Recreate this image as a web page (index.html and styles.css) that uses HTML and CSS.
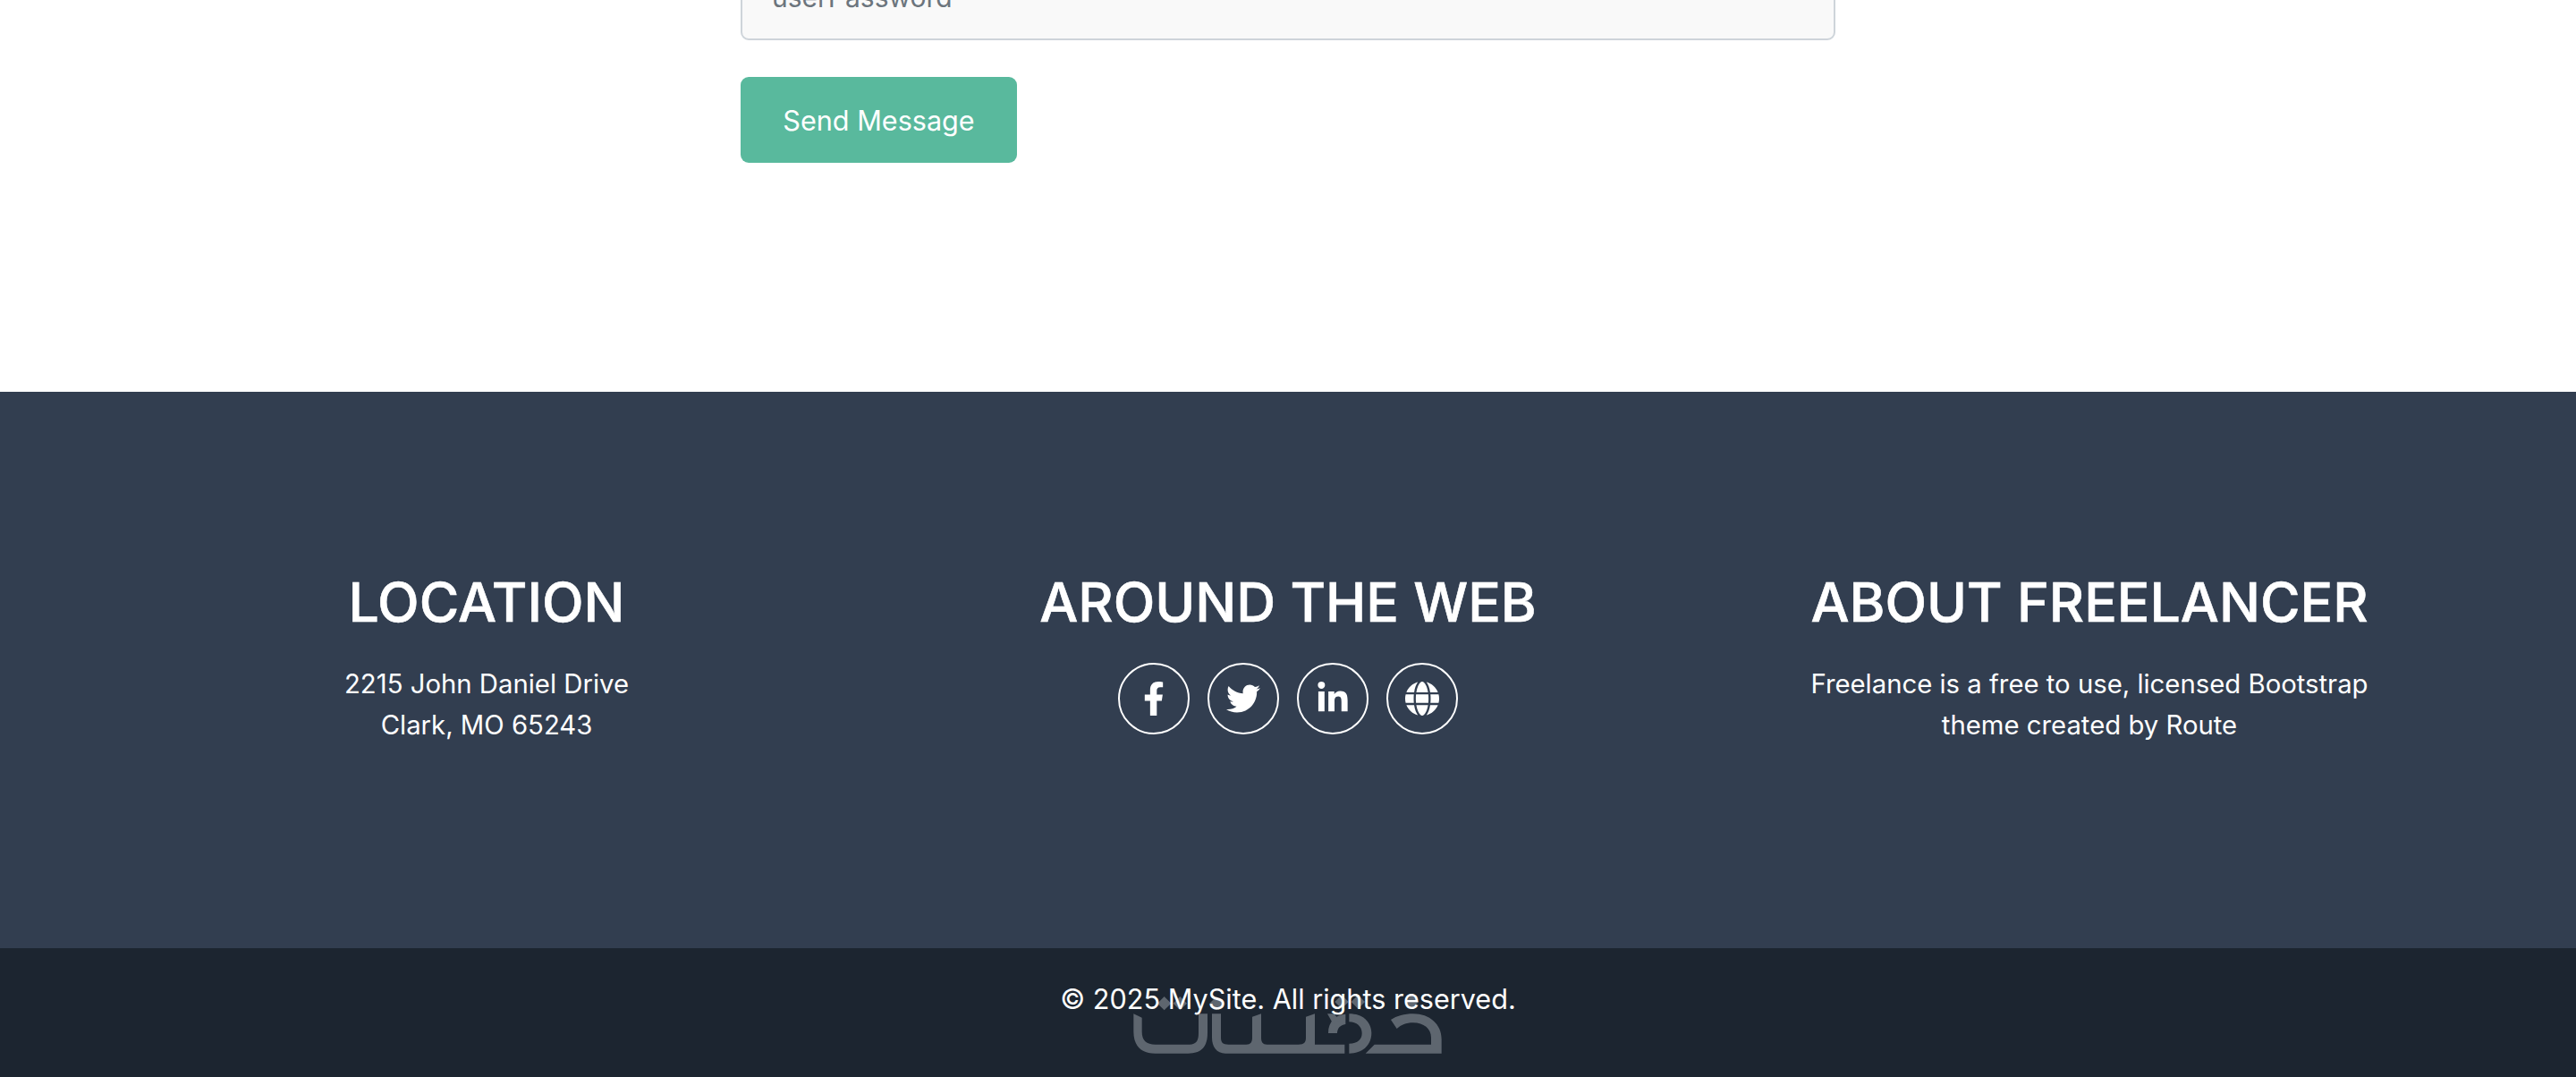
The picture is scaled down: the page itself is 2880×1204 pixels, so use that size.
FILE: index.html
```html
<!DOCTYPE html>
<html lang="en">
<head>
<meta charset="utf-8">
<title>Freelancer</title>
<link rel="stylesheet" href="styles.css">
</head>
<body>
<div class="page">
  <section class="contact">
    <form class="form">
      <input class="input" type="text" placeholder="userPassword">
      <button class="send" type="button">Send Message</button>
    </form>
  </section>
  <footer class="footer">
    <div class="col">
      <h4 class="title">LOCATION</h4>
      <p class="text">2215 John Daniel Drive<br>Clark, MO 65243</p>
    </div>
    <div class="col">
      <h4 class="title">AROUND THE WEB</h4>
      <div class="socials">
        <a class="social"><svg class="ico" viewBox="0 0 320 512"><path fill="#fff" d="M279.14 288l14.22-92.66h-88.91v-60.13c0-25.35 12.42-50.06 52.24-50.06h40.42V6.26S260.43 0 225.36 0c-73.22 0-121.08 44.38-121.08 124.72v70.62H22.89V288h81.39v224h100.17V288z"/></svg></a>
        <a class="social"><svg class="ico" viewBox="0 0 512 512"><path fill="#fff" d="M459.37 151.716c.325 4.548.325 9.097.325 13.645 0 138.72-105.583 298.558-298.558 298.558-59.452 0-114.68-17.219-161.137-47.106 8.447.974 16.568 1.299 25.34 1.299 49.055 0 94.213-16.568 130.274-44.832-46.132-.975-84.792-31.188-98.112-72.772 6.498.974 12.995 1.624 19.818 1.624 9.421 0 18.843-1.3 27.614-3.573-48.081-9.747-84.143-51.98-84.143-102.985v-1.299c13.969 7.797 30.214 12.67 47.431 13.319-28.264-18.843-46.781-51.005-46.781-87.391 0-19.492 5.197-37.36 14.294-52.954 51.655 63.675 129.3 105.258 216.365 109.807-1.624-7.797-2.599-15.918-2.599-24.04 0-57.828 46.782-104.934 104.934-104.934 30.213 0 57.502 12.67 76.67 33.137 23.715-4.548 46.456-13.32 66.599-25.34-7.798 24.366-24.366 44.833-46.132 57.827 21.117-2.273 41.584-8.122 60.426-16.243-14.292 20.791-32.161 39.308-52.628 54.253z"/></svg></a>
        <a class="social"><svg class="ico" viewBox="0 0 448 512"><path fill="#fff" d="M100.28 448H7.4V148.9h92.88zM53.79 108.1C24.09 108.1 0 83.5 0 53.8a53.79 53.79 0 0 1 107.58 0c0 29.7-24.1 54.3-53.79 54.3zM447.9 448h-92.68V302.4c0-34.7-.7-79.2-48.29-79.2-48.29 0-55.69 37.7-55.69 76.7V448h-92.78V148.9h89.08v40.8h1.3c12.4-23.5 42.69-48.3 87.88-48.3 94 0 111.28 61.9 111.28 142.3V448z"/></svg></a>
        <a class="social"><svg class="ico" viewBox="0 0 512 512"><path fill="#fff" d="M352 256c0 22.2-1.2 43.6-3.3 64H163.3c-2.2-20.4-3.3-41.8-3.3-64s1.2-43.6 3.3-64H348.7c2.2 20.4 3.3 41.8 3.3 64zm28.8-64H503.9c5.3 20.5 8.1 41.9 8.1 64s-2.8 43.5-8.1 64H380.8c2.1-20.6 3.2-42 3.2-64s-1.1-43.4-3.2-64zm112.6-32H376.7c-10-63.9-29.8-117.4-55.3-151.6c78.3 20.7 142 77.5 171.9 151.6zm-149.1 0H167.7c6.1-36.4 15.5-68.6 27-94.7c10.5-23.6 22.2-40.7 33.5-51.5C239.4 3.2 248.7 0 256 0s16.6 3.2 27.8 13.8c11.3 10.8 23 27.9 33.5 51.5c11.6 26 21 58.2 27 94.7zm-209 0H18.6C48.6 85.9 112.2 29.1 190.6 8.4C165.1 42.6 145.3 96.1 135.3 160zM8.1 192H131.2c-2.1 20.6-3.2 42-3.2 64s1.1 43.4 3.2 64H8.1C2.8 299.5 0 278.1 0 256s2.8-43.5 8.1-64zM194.7 446.6c-11.6-26-20.9-58.2-27-94.6H344.3c-6.1 36.4-15.5 68.6-27 94.6c-10.5 23.6-22.2 40.7-33.5 51.5C272.6 508.8 263.3 512 256 512s-16.6-3.2-27.8-13.8c-11.3-10.8-23-27.9-33.5-51.5zM135.3 352c10 63.9 29.8 117.4 55.3 151.6C112.2 482.9 48.6 426.1 18.6 352H135.3zm358.1 0c-30 74.1-93.6 130.9-171.9 151.6c25.5-34.2 45.2-87.7 55.3-151.6H493.4z"/></svg></a>
      </div>
    </div>
    <div class="col">
      <h4 class="title">ABOUT FREELANCER</h4>
      <p class="text">Freelance is a free to use, licensed Bootstrap<br>theme created by Route</p>
    </div>
  </footer>
  <div class="copyright">
    <svg class="logo" viewBox="0 0 1080 240">
      <g fill="#5e666f">
        <path d="M22 85L50 98V145C50 175 65 188 95 188H210C232 188 240 175 240 150V85H270V150C270 195 250 218 205 218H95C45 218 22 190 22 145Z"/>
        <path d="M285 85H315V165C315 182 322 188 340 188H400C415 188 420 180 420 165V95L450 85V165C450 180 455 188 470 188H575C595 188 600 180 600 165V95L630 85V188H730V218H330C300 218 285 195 285 165Z"/>
        <path d="M745 85C795 85 820 115 820 150C820 190 790 218 745 218V185C775 185 788 170 788 150C788 128 770 112 745 112Z"/>
        <path d="M733 86V120C715 122 705 135 705 150H675C675 110 700 88 733 86Z"/>
        <path d="M672 85H695L712 108L692 120Z"/>
        <path d="M800 218L830 188H1020V165C1020 135 995 115 960 115C935 115 920 122 905 135L885 105C905 92 930 85 960 85C1015 85 1055 120 1055 170V218Z"/>
        <path d="M125 27L148 50L125 73L102 50Z"/>
        <path d="M178 27L201 50L178 73L155 50Z"/>
        <path d="M300 27L323 50L300 73L277 50Z"/>
        <path d="M720 22L743 45L720 68L697 45Z"/>
        <path d="M775 22L798 45L775 68L752 45Z"/>
        <path d="M955 22L978 45L955 68L932 45Z"/>
      </g>
    </svg>
    <p class="copy">© 2025 MySite. All rights reserved.</p>
  </div>
</div>
</body>
</html>
```
FILE: styles.css
```css
html, body { margin: 0; padding: 0; height: 100%; }
body { font-family: Inter, "Liberation Sans", sans-serif; overflow: hidden; background: #fff; }
.page { height: 1204px; display: flex; flex-direction: column; justify-content: flex-end; overflow: hidden; }
.contact { flex: none; display: flex; justify-content: center; padding-bottom: 256px; }
.form { width: 1224px; display: flex; flex-direction: column; align-items: flex-start; gap: 41px; }
.input { display: block; width: 100%; height: 120px; box-sizing: border-box; padding: 44px 33px 20px; border: 2px solid #ced4da; border-radius: 9px; background: #f9f9f9; font: 30px Inter, sans-serif; }
.input::placeholder { color: #6c757d; opacity: 1; }
.send { width: 309px; height: 96px; border: 0; border-radius: 9px; background: #59b99d; color: #fff; font: 30.6px Inter, sans-serif; }
.footer { flex: none; height: 622px; box-sizing: border-box; padding: 198px 96px 0; background: #323e50; color: #fff; display: grid; grid-template-columns: repeat(3, 1fr); text-align: center; }
.title { margin: 0 0 32px; font-weight: 500; font-size: 60.8px; line-height: 74px; -webkit-text-stroke: 0.6px #fff; }
.text { margin: 0; font-size: 29.3px; line-height: 46px; }
.socials { display: flex; justify-content: center; gap: 20px; margin-top: -1px; }
.social { width: 80px; height: 80px; box-sizing: border-box; border: 2px solid #fff; border-radius: 50%; display: flex; align-items: center; justify-content: center; }
.ico { height: 38px; width: 38px; }
.copyright { flex: none; height: 144px; background: #1c2530; color: #fff; position: relative; text-align: center; }
.copy { margin: 0; padding-top: 34px; font-size: 30.6px; line-height: 46px; position: relative; }
.logo { position: absolute; left: 1260px; top: 45px; width: 360px; height: 80px; }
```
